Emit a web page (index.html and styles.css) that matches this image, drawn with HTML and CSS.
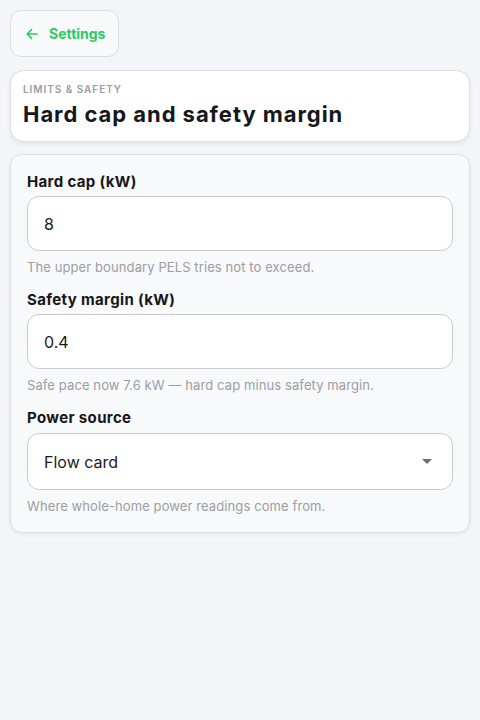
FILE: index.html
```html
<!DOCTYPE html>
<html lang="en">
<head>
<meta charset="utf-8">
<title>Hard cap and safety margin</title>
<link rel="stylesheet" href="styles.css">
</head>
<body>
<div class="page">
  <button class="back">
    <svg class="back-icon" viewBox="0 0 16 16" width="14" height="14" aria-hidden="true"><path d="M14 8H2.5M7.5 3L2.5 8l5 5" fill="none" stroke="currentColor" stroke-width="1.8" stroke-linecap="round" stroke-linejoin="round"/></svg>
    <span>Settings</span>
  </button>
  <header class="head-card">
    <div class="eyebrow">LIMITS &amp; SAFETY</div>
    <h1 class="title">Hard cap and safety margin</h1>
  </header>
  <section class="form-card">
    <div class="field">
      <label class="label">Hard cap (kW)</label>
      <div class="input">8</div>
      <p class="hint">The upper boundary PELS tries not to exceed.</p>
    </div>
    <div class="field">
      <label class="label">Safety margin (kW)</label>
      <div class="input">0.4</div>
      <p class="hint">Safe pace now 7.6 kW — hard cap minus safety margin.</p>
    </div>
    <div class="field">
      <label class="label">Power source</label>
      <div class="input select"><span>Flow card</span><span class="caret"></span></div>
      <p class="hint">Where whole-home power readings come from.</p>
    </div>
  </section>
</div>
</body>
</html>
```
FILE: styles.css
```css
* { box-sizing: border-box; }
html, body { margin: 0; padding: 0; }
body {
  background: #f4f5f9;
  font-family: Inter, "Noto Sans", sans-serif;
  color: #16171a;
}
.page {
  padding: 10px;
  display: flex;
  flex-direction: column;
  align-items: flex-start;
}
.back {
  display: flex;
  align-items: center;
  gap: 10px;
  height: 47px;
  padding: 0 13px 0 14px;
  border: 1px solid #dcdde2;
  border-radius: 11px;
  background: #f8f9fb;
  color: #2bcb63;
  font-family: inherit;
  font-weight: 700;
  font-size: 14px;
}
.head-card {
  margin-top: 13px;
  align-self: stretch;
  background: #fff;
  border: 1px solid #dedfe4;
  border-radius: 14px;
  box-shadow: 0 2px 5px rgba(20, 25, 40, 0.08);
  padding: 12px 12px 12px;
}
.eyebrow {
  font-size: 10px;
  font-weight: 600;
  letter-spacing: 0.95px;
  color: #9a9ca3;
  line-height: 12px;
}
.title {
  margin: 4px 0 0;
  font-size: 22px;
  font-weight: 700;
  letter-spacing: 0.95px;
  line-height: 30px;
  color: #16171a;
}
.form-card {
  margin-top: 12px;
  align-self: stretch;
  background: #f8f9fb;
  border: 1px solid #dedfe4;
  border-radius: 12px;
  box-shadow: 0 1px 4px rgba(20, 25, 40, 0.07);
  padding: 17px 16px 17px;
  display: flex;
  flex-direction: column;
  gap: 14px;
}
.field { display: flex; flex-direction: column; }
.label {
  font-size: 15px;
  font-weight: 700;
  letter-spacing: 0.35px;
  line-height: 20px;
  color: #16171a;
}
.input {
  margin-top: 4px;
  height: 55px;
  background: #fff;
  border: 1px solid #c9cace;
  border-radius: 12px;
  padding: 0 16px;
  display: flex;
  align-items: center;
  font-size: 16px;
  color: #1a1b1e;
}
.select {
  height: 57px;
  margin-top: 5px;
  justify-content: space-between;
}
.caret {
  width: 0; height: 0;
  border-left: 5px solid transparent;
  border-right: 5px solid transparent;
  border-top: 5px solid #6f7075;
  margin-right: 4px;
}
.hint {
  margin: 7px 0 0;
  font-size: 13px;
  letter-spacing: 0.1px;
  line-height: 18px;
  color: #9c9da3;
}
```
